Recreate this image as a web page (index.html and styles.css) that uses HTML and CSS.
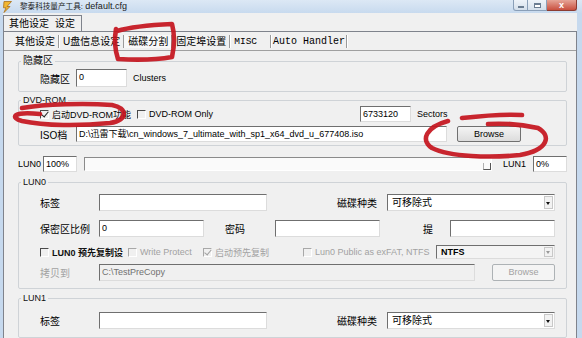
FILE: index.html
```html
<!DOCTYPE html>
<html lang="zh-CN">
<head>
  <meta charset="UTF-8">
  <title>黎泰科技量产工具</title>
  <link rel="stylesheet" href="styles.css">
</head>
<body>

  <div class="window">
    <div class="titlebar">
      <svg class="app-icon" viewBox="0 0 9 12" width="9" height="12">
        <polygon points="1,0.5 8.5,0.5 4,5.5 7,5.5 1,11.5 3,6.8 0.5,6.8" fill="#f2b630" stroke="#a8701a" stroke-width="0.8"/>
      </svg>
      <span class="title"><span class="title-cn">黎泰科技量产工具:</span> default.cfg</span>
      <div class="controls">
        <span class="ctl min"><i></i></span>
        <span class="ctl max"><i></i></span>
        <span class="ctl close">x</span>
      </div>
    </div>

    <div class="client">
      <div class="tabs-outer">
        <div class="otab first">其他设定</div>
        <div class="otab active">设定</div>
      </div>

      <div class="outer-panel">
        <div class="tabs-inner">
          <div class="itab">其他设定</div>
          <div class="itab">U盘信息设定</div>
          <div class="itab active">磁碟分割</div>
          <div class="itab">固定埠设置</div>
          <div class="itab mono misc">MISC</div>
          <div class="itab mono auto">Auto Handler</div>
        </div>

        <div class="inner-panel">
          <fieldset class="group hidden-area">
            <legend>隐藏区</legend>
            <div class="group-body">
              <div class="row">
                <span class="lbl short">隐藏区</span>
                <span class="field num">0</span>
                <span class="unit">Clusters</span>
              </div>
            </div>
          </fieldset>

          <fieldset class="group dvd">
            <legend>DVD-ROM</legend>
            <div class="group-body">
              <div class="row slim">
                <label class="check dvd-on"><span class="cb on"></span>启动DVD-ROM功能</label>
                <label class="check dvd-only"><span class="cb"></span>DVD-ROM Only</label>
                <span class="field num">6733120</span>
                <span class="unit">Sectors</span>
              </div>
              <div class="row slim next">
                <span class="lbl short">ISO档</span>
                <span class="field iso">D:\迅雷下载\cn_windows_7_ultimate_with_sp1_x64_dvd_u_677408.iso</span>
                <span class="btn">Browse</span>
              </div>
            </div>
          </fieldset>

          <div class="lun-bar">
            <span class="lun-name">LUN0</span>
            <span class="field pct">100%</span>
            <div class="slider"><span class="thumb"></span></div>
            <span class="lun-name right">LUN1</span>
            <span class="field pct">0%</span>
          </div>

          <fieldset class="group lun">
            <legend>LUN0</legend>
            <div class="group-body lun-body">
              <div class="row">
                <span class="lbl wide">标签</span>
                <span class="field name"></span>
                <span class="lbl kind">磁碟种类</span>
                <span class="select kind-select">可移除式<i class="arrow"></i></span>
              </div>
              <div class="row r2">
                <span class="lbl wide">保密区比例</span>
                <span class="field third">0</span>
                <span class="lbl pwd">密码</span>
                <span class="field third"></span>
                <span class="lbl hint">提</span>
                <span class="field third"></span>
              </div>
              <div class="row opts">
                <label class="check strong c1"><span class="cb"></span>LUN0 预先复制设</label>
                <label class="check off c2"><span class="cb"></span>Write Protect</label>
                <label class="check off c3"><span class="cb on"></span>启动预先复制</label>
                <label class="check off c4"><span class="cb"></span>Lun0 Public as exFAT, NTFS</label>
                <span class="select fs">NTFS<i class="arrow"></i></span>
              </div>
              <div class="row r4">
                <span class="lbl wide off">拷贝到</span>
                <span class="field copy off">C:\TestPreCopy</span>
                <span class="btn off">Browse</span>
              </div>
            </div>
          </fieldset>

          <fieldset class="group lun lun1">
            <legend>LUN1</legend>
            <div class="group-body lun1-body">
              <div class="row">
                <span class="lbl wide">标签</span>
                <span class="field name"></span>
                <span class="lbl kind">磁碟种类</span>
                <span class="select kind-select">可移除式<i class="arrow"></i></span>
              </div>
            </div>
          </fieldset>
        </div>
      </div>
    </div>

    <!-- red pen marks drawn over the screenshot -->
    <svg class="marks" viewBox="0 0 582 338" width="582" height="338">
      <path d="M117,31 C130,27 150,25 172,24 C175,35 174,48 172,57 C155,60 135,60 118,59 C115,50 114,40 116,29" />
      <path d="M22,108 C45,104 85,103 112,105 C128,108 128,120 110,123 C80,126 45,126 22,121 C10,118 12,111 40,114" />
      <path d="M462,118 C480,116 505,114 522,115" />
      <path d="M488,124 C505,123 520,124 538,128 C552,136 548,150 520,155 C490,158 450,157 432,148 C420,140 426,127 448,121" />
    </svg>
  </div>

</body>
</html>
```

FILE: styles.css
```css
* {
  box-sizing: border-box;
}

body {
  margin: 0;
  width: 582px;
  height: 338px;
  overflow: hidden;
  font-family: "Liberation Sans", "Noto Sans CJK SC", sans-serif;
  font-size: 9px;
  color: #000;
  background: #c6d9ee;
}

.window {
  position: relative;
  width: 582px;
  height: 338px;
  display: flex;
  flex-direction: column;
  background: #c6d9ee;
}

/* title bar */
.titlebar {
  height: 14px;
  display: flex;
  align-items: center;
  padding-left: 3px;
  background: linear-gradient(#dce8f5, #c8daee);
}

.app-icon {
  margin-right: 8px;
}

.title {
  font-size: 9px;
  line-height: 12px;
  color: #1a1a1a;
}

.title-cn {
  font-size: 7.6px;
}

.controls {
  margin-left: auto;
  margin-right: 5px;
  align-self: flex-start;
  display: flex;
}

.ctl {
  height: 11px;
  border: 1px solid #8a9fb8;
  border-top: none;
  background: linear-gradient(#eef3f9, #d4dfeb);
  display: flex;
  align-items: center;
  justify-content: center;
}

.ctl.min {
  width: 15px;
  border-radius: 0 0 0 3px;
}

.ctl.min i {
  width: 6px;
  height: 2px;
  margin-top: 3px;
  background: #fff;
  border: 1px solid #6b7d92;
}

.ctl.max {
  width: 19px;
  border-left: none;
}

.ctl.max i {
  width: 7px;
  height: 5px;
  border: 1px solid #6b7d92;
  border-top-width: 2px;
  background: #fff;
}

.ctl.close {
  width: 30px;
  border-left: none;
  border-color: #8c3c32;
  border-radius: 0 0 3px 0;
  background: linear-gradient(#e6a597, #c9503f);
  color: #fff;
  font-weight: bold;
  font-size: 9px;
  line-height: 9px;
}

/* client area */
.client {
  flex: 1;
  margin: 0 5px 0 3px;
  background: #f0f0f0;
  display: flex;
  flex-direction: column;
}

.tabs-outer {
  display: flex;
  padding-top: 2px;
  height: 18px;
}

.otab {
  height: 16px;
  border-top: 1px solid #7f838c;
  font-size: 10px;
  line-height: 15px;
}

.otab.first {
  border-left: 1px solid #7f838c;
  padding: 0 5px 0 5px;
}

.otab.active {
  border-right: 1px solid #7f838c;
  padding: 0 6px 0 1px;
}

.outer-panel {
  flex: 1;
  border: 1px solid #7f838c;
  border-bottom: none;
  display: flex;
  flex-direction: column;
}

.tabs-inner {
  display: flex;
  height: 18px;
  padding-left: 7px;
}

.itab {
  height: 13px;
  margin-top: 3px;
  padding: 0 3px 0 4px;
  font-size: 10px;
  line-height: 13px;
  border-right: 1px solid #9a9a9a;
  box-shadow: 1px 0 0 #fff;
}

.itab.active {
  background: #f8f8f8;
}

.itab.mono {
  font-family: "Liberation Mono", monospace;
}

.itab.misc {
  font-size: 9.5px;
  padding-right: 13px;
}

.itab.auto {
  padding: 0 1px 0 2px;
}

.inner-panel {
  flex: 1;
  border-top: 1px solid #a0a0a0;
  padding: 4px 9px 0 14px;
}

/* group boxes */
.group {
  margin: 0;
  padding: 0;
  min-width: 0;
  border: 1px solid #cfd3d7;
  border-radius: 2px;
}

.group legend {
  margin-left: 2px;
  padding: 0 2px;
  font-size: 10px;
  line-height: 12px;
  color: #111;
}

.dvd legend,
.lun legend {
  font-size: 9px;
}

.group-body {
  padding: 2px 0 4px 21px;
}

.dvd {
  margin-top: 2px;
}

.dvd .group-body {
  padding: 0 0 3px 21px;
}

.row {
  display: flex;
  align-items: center;
  height: 18px;
}

.row.slim {
  height: 16px;
}

.row.next {
  margin-top: 4px;
}

.lbl {
  font-size: 10px;
  white-space: nowrap;
}

.lbl.short {
  width: 36px;
}

.lbl.wide {
  width: 59px;
}

.lbl.kind {
  width: 120px;
  text-align: right;
  padding-right: 10px;
}

.lbl.pwd {
  width: 71px;
  padding-left: 21px;
}

.lbl.hint {
  width: 70px;
  text-align: right;
  padding-right: 17px;
}

.unit {
  margin-left: 6px;
}

.off {
  color: #a2a2a2;
}

/* text boxes */
.field {
  height: 100%;
  padding: 1px 0 0 2px;
  background: #fff;
  border: 1px solid;
  border-color: #6f6f6f #dcdcdc #dcdcdc #6f6f6f;
  font-size: 9px;
  line-height: 12px;
  white-space: nowrap;
  overflow: hidden;
}

.field.num {
  width: 51px;
}

.field.iso {
  width: 371px;
}

.field.name {
  width: 168px;
}

.field.third {
  width: 105px;
}

.field.copy {
  width: 376px;
  background: #f0f0f0;
  color: #707070;
}

.field.pct {
  width: 34px;
  height: 16px;
}

/* buttons */
.btn {
  margin-left: 10px;
  width: 64px;
  height: 16px;
  border: 1px solid #707070;
  border-radius: 2px;
  background: linear-gradient(#f4f4f4, #dcdcdc);
  text-align: center;
  line-height: 14px;
  font-size: 9px;
}

.btn.off {
  margin-left: 17px;
  width: 63px;
  height: 17px;
  border-color: #adb2b5;
  background: #f4f4f4;
}

/* check boxes */
.check {
  display: flex;
  align-items: center;
  white-space: nowrap;
  font-size: 9px;
}

.cb {
  position: relative;
  width: 9px;
  height: 9px;
  margin-right: 3px;
  border: 1px solid;
  border-color: #4a4a4a #fff #fff #4a4a4a;
}

.cb.on::after {
  content: "";
  position: absolute;
  left: 2px;
  top: -1px;
  width: 3px;
  height: 6px;
  border: solid #222;
  border-width: 0 1.5px 1.5px 0;
  transform: rotate(40deg);
}

.check.off .cb {
  border-color: #a8a8a8 #fff #fff #a8a8a8;
}

.check.off .cb.on::after {
  border-color: #a0a0a0;
}

.check.dvd-on {
  width: 97px;
}

.check.dvd-only {
  width: 223px;
}

.check.strong {
  color: #111;
  font-weight: bold;
}

.c1 { width: 88px; }
.c2 { width: 75px; }
.c3 { width: 100px; }
.c4 { width: 133px; }

/* combo boxes */
.select {
  position: relative;
  height: 100%;
  padding: 1px 0 0 4px;
  border: 1px solid;
  border-color: #6f6f6f #dcdcdc #dcdcdc #6f6f6f;
  background: #fff;
  font-size: 10px;
  line-height: 13px;
}

.kind-select {
  width: 168px;
  height: 17px;
}

.select.fs {
  width: 119px;
  height: 14px;
  padding-top: 0;
  font-size: 9px;
  line-height: 12px;
  font-weight: bold;
  background: #f4f4f4;
}

.arrow {
  position: absolute;
  right: 1px;
  top: 1px;
  bottom: 1px;
  width: 9px;
  border: 1px solid #c8c8c8;
  background: #f2f2f2;
}

.arrow::after {
  content: "";
  position: absolute;
  left: 1px;
  top: 50%;
  margin-top: -1px;
  border: 2.5px solid transparent;
  border-top: 3px solid #111;
}

.fs .arrow::after {
  border-top-color: #999;
}

/* LUN size bar */
.lun-bar {
  display: flex;
  align-items: center;
  height: 16px;
  margin-top: 10px;
}

.lun-name {
  margin-right: 2px;
}

.lun-name.right {
  margin: 0 7px 0 11px;
}

.slider {
  flex: 1;
  height: 14px;
  margin-left: 7px;
  border: 1px solid;
  border-color: #8a8a8a #fff #fff #8a8a8a;
  background: #fafafa;
  display: flex;
  justify-content: flex-end;
}

.thumb {
  width: 8px;
  margin-top: 5px;
  border-right: 1px solid #555;
  border-bottom: 1px solid #555;
  border-left: 1px solid #b0b0b0;
}

/* LUN groups */
.lun {
  margin-top: 4px;
}

.lun-body {
  padding: 6px 0 7px 21px;
}

.lun-body .row {
  height: 17px;
}

.lun-body .row.r2 {
  margin-top: 9px;
}

.lun-body .row.opts {
  margin-top: 8px;
  height: 14px;
}

.lun-body .row.r4 {
  margin-top: 5px;
}

.lun1 {
  margin-top: 3px;
}

.lun1-body {
  padding: 8px 0 8px 21px;
}

.lun1-body .row {
  height: 17px;
}

/* red pen annotations */
.marks {
  position: absolute;
  left: 0;
  top: 0;
  pointer-events: none;
}

.marks path {
  fill: none;
  stroke: #c4141d;
  stroke-width: 4.6;
  stroke-linecap: round;
  stroke-linejoin: round;
  opacity: 0.92;
}
```
